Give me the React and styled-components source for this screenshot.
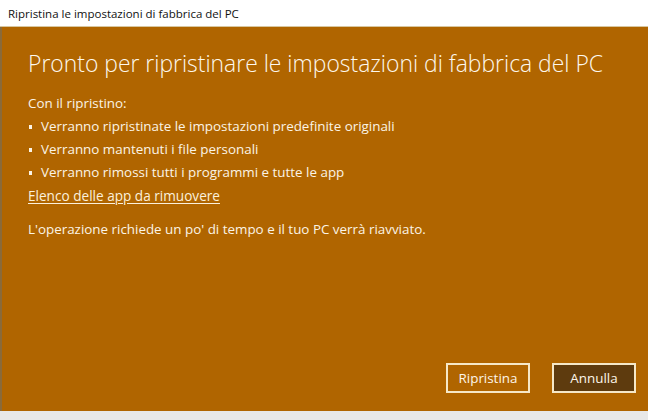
import styled, { createGlobalStyle } from "styled-components";

const Global = createGlobalStyle`
  html, body { margin: 0; padding: 0; }
  body { width: 648px; height: 420px; overflow: hidden; background: #e8e8e8; }
`;

const Window = styled.div`
  display: flex;
  flex-direction: column;
  width: 648px;
  height: 411px;
  font-family: "Open Sans", "Noto Sans", sans-serif;
`;

const TitleBar = styled.div`
  height: 26px;
  display: flex;
  align-items: center;
  padding-left: 8px;
  background: #ffffff;
  border-bottom: 1px solid #d8c7a0;
  font-size: 11.5px;
  color: #111;
`;

const Body = styled.div`
  flex: 1;
  display: flex;
  flex-direction: column;
  background: #b06500;
  border-left: 2px solid #8a6a3a;
  padding: 22px 12px 18px 26px;
  color: #fbf4e6;
`;

const Heading = styled.h1`
  margin: 0 0 13px 0;
  font-weight: 300;
  font-size: 22.9px;
  line-height: 30px;
  color: #fdf8ee;
  white-space: nowrap;
`;

const Line = styled.div`
  font-size: 13.4px;
  line-height: 23px;
  white-space: nowrap;
`;

const List = styled.ul`
  list-style: none;
  margin: 0;
  padding: 0;
`;

const Item = styled.li`
  display: flex;
  font-size: 13.4px;
  line-height: 23px;
  &::before {
    content: "";
    width: 3px;
    height: 4px;
    background: #fbf4e6;
    margin: 10px 9px 0 1px;
  }
`;

const Link = styled.a`
  font-size: 13.6px;
  line-height: 24px;
  color: #fbf0dc;
  text-decoration: underline;
  text-underline-offset: 2px;
  margin-bottom: 10px;
  align-self: flex-start;
`;

const Footer = styled.div`
  margin-top: auto;
  display: flex;
  justify-content: flex-end;
  gap: 22px;
`;

const Button = styled.button`
  width: 84px;
  height: 30px;
  border: 2px solid #f6e8c8;
  background: ${(p) => (p.$primary ? "#5e3b0e" : "transparent")};
  color: #fdf6ea;
  font-family: inherit;
  font-size: 13.4px;
  padding: 0;
`;

export default function App() {
  return (
    <>
      <Global />
      <Window>
        <TitleBar>Ripristina le impostazioni di fabbrica del PC</TitleBar>
        <Body>
          <Heading>Pronto per ripristinare le impostazioni di fabbrica del PC</Heading>
          <Line>Con il ripristino:</Line>
          <List>
            <Item>Verranno ripristinate le impostazioni predefinite originali</Item>
            <Item>Verranno mantenuti i file personali</Item>
            <Item>Verranno rimossi tutti i programmi e tutte le app</Item>
          </List>
          <Link href="#">Elenco delle app da rimuovere</Link>
          <Line>L'operazione richiede un po' di tempo e il tuo PC verrà riavviato.</Line>
          <Footer>
            <Button>Ripristina</Button>
            <Button $primary>Annulla</Button>
          </Footer>
        </Body>
      </Window>
    </>
  );
}
